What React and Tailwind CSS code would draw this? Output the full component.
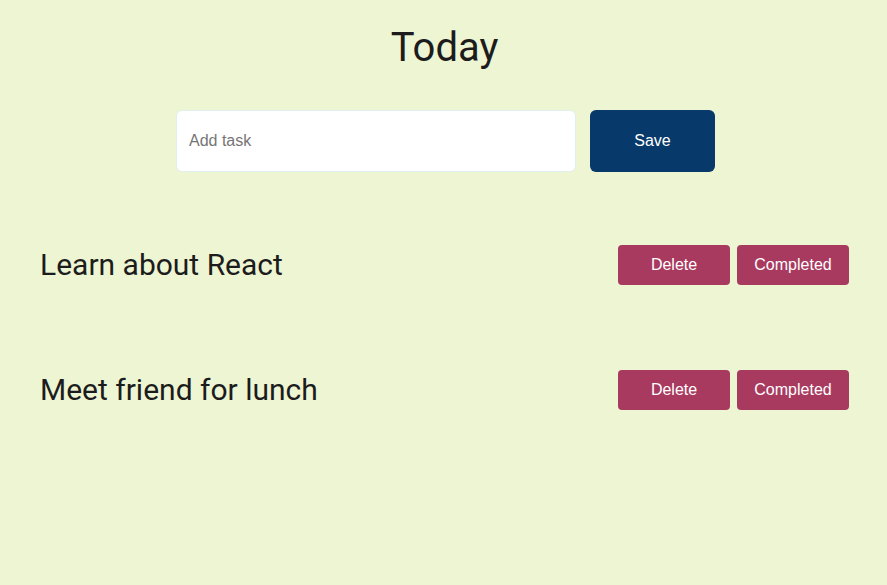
import React, { useState } from 'react';

const TaskRow = ({ title }) => (
    <div className="flex items-center justify-between h-[125px]">
        <h2 className="text-[30px] text-[#1c1c1c]" style={{ fontFamily: 'Roboto, sans-serif' }}>{title}</h2>
        <div className="flex gap-[7px]">
            <button className="w-[112px] h-10 rounded-[4px] bg-[#a83a5f] text-white text-base">Delete</button>
            <button className="w-[112px] h-10 rounded-[4px] bg-[#a83a5f] text-white text-base">Completed</button>
        </div>
    </div>
);

export default function App() {
    const [task, setTask] = useState('');
    const tasks = ['Learn about React', 'Meet friend for lunch'];

    return (
        <div className="min-h-screen bg-[#eef5d3] font-['Liberation_Sans',Arial,sans-serif]">
            <h1 className="pt-[23px] pl-[2px] text-center text-[40px] leading-[50px] text-[#1c1c1c]" style={{ fontFamily: 'Roboto, sans-serif' }}>
                Today
            </h1>

            {/* Add task */}
            <div className="mt-[37px] pl-1 flex justify-center gap-[14px]">
                <input
                    value={task}
                    onChange={(e) => setTask(e.target.value)}
                    placeholder="Add task"
                    className="w-[400px] h-[62px] bg-white rounded-[6px] border border-[#dff0ee] px-3 text-base outline-none placeholder:text-[#757575]"
                />
                <button className="w-[125px] h-[62px] rounded-[6px] bg-[#07396a] text-white text-base">Save</button>
            </div>

            {/* Tasks */}
            <div className="mt-[30px] pl-10 pr-[38px]">
                {tasks.map((t) => (
                    <TaskRow key={t} title={t} />
                ))}
            </div>
        </div>
    );
}
